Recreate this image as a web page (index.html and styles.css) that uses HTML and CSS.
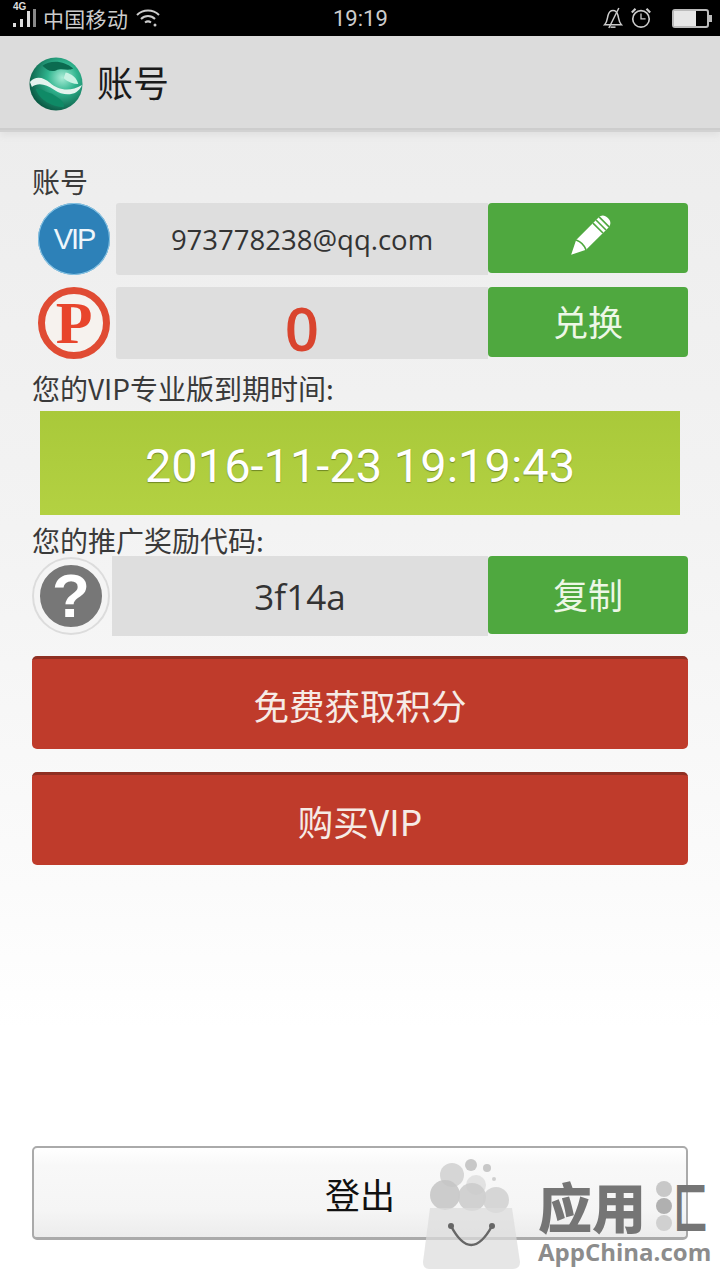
FILE: index.html
```html
<!DOCTYPE html>
<html>
<head>
	<meta charset="utf-8">
	<title>账号</title>
	<link rel="stylesheet" href="styles.css">
</head>
<body>
	<div class="phone">
		<div class="statusbar">
			<div class="status-left">
				<svg class="signal" width="26" height="24" viewBox="0 0 26 24">
					<rect x="0" y="17" width="3" height="4" fill="#ddd"/>
					<rect x="7" y="13" width="3" height="8" fill="#ddd"/>
					<rect x="14" y="5" width="3" height="16" fill="#ddd"/>
					<rect x="20" y="3" width="3" height="18" fill="#888"/>
				</svg>
				<span class="signal-tag">4G</span>
				<span class="carrier">中国移动</span>
				<svg class="wifi" width="26" height="20" viewBox="0 0 26 20" fill="none" stroke="#ccc" stroke-width="2">
					<path d="M2 7C8 1 18 1 24 7"/>
					<path d="M6 11C10 7 16 7 20 11"/>
					<path d="M10 14.500C12 13 14 13 16 14.500"/>
					<circle cx="20" cy="17" r="1.500" fill="#ccc" stroke="none"/>
				</svg>
			</div>
			<span class="clock">19:19</span>
			<div class="status-right">
				<svg width="20" height="26" viewBox="0 0 24 26" fill="none" stroke="#ccc" stroke-width="1.800">
					<path d="M2 21C5 18 5 14 6 10C7 6 10 4 12 4C15 4 17 6 18 10C19 14 19 18 22 21Z"/>
					<path d="M9 24H15"/>
					<path d="M19 1L7 25"/>
				</svg>
				<svg width="22" height="24" viewBox="0 0 24 26" fill="none" stroke="#ccc" stroke-width="1.800">
					<circle cx="12" cy="14" r="9"/>
					<path d="M12 8V14H17" stroke-width="1.400"/>
					<path d="M2 7L6 3M22 7L18 3" stroke-width="2.400"/>
				</svg>
				<div class="battery"><div class="battery-level"></div></div>
			</div>
		</div>

		<div class="appbar">
			<svg class="globe" width="54" height="54" viewBox="0 0 56 56">
				<defs>
					<radialGradient id="sea" cx="0.62" cy="0.38" r="0.7">
						<stop offset="0" stop-color="#a8ecd6"/>
						<stop offset="0.4" stop-color="#2fb48e"/>
						<stop offset="1" stop-color="#06503c"/>
					</radialGradient>
				</defs>
				<circle cx="28" cy="28" r="27.500" fill="url(#sea)"/>
				<path d="M7 33C10 44 24 52 36 52C38 46 30 42 24 38C16 36 12 32 7 33Z" fill="#0f8a66"/>
				<path d="M14 9C22 3 36 3 46 12C40 15 34 11 28 14C22 16 18 13 14 9Z" fill="#0b6b50"/>
				<path d="M38 16C44 17 50 22 51 28C46 28 40 26 36 22Z" fill="#c9f3e4"/>
				<path d="M1 26C7 19 15 21 22 27C30 34 42 37 55 29C50 41 36 41 26 34C18 28 9 26 3 31Z" fill="#e4f3ee"/>
			</svg>
			<span class="appbar-title">账号</span>
		</div>

		<div class="content">
			<div class="label label-first">账号</div>
			<div class="row row-tight">
				<div class="badge badge-vip">VIP</div>
				<div class="field field-mail">973778238@qq.com</div>
				<div class="btn-green btn-short">
					<svg width="52" height="52" viewBox="0 0 48 48">
						<g transform="rotate(45 24 24)">
							<path d="M24 -2C28 -2 30.500 0 30.500 4V33L24 46L17.500 33V4C17.500 0 20 -2 24 -2Z" fill="#fff"/>
							<path d="M17.500 3H30.500M17.500 7H30.500M17.500 11H30.500" stroke="#4fa83f" stroke-width="1.500"/>
							<path d="M17.500 33Q24 30 30.500 33" stroke="#4fa83f" stroke-width="1.500" fill="none"/>
						</g>
					</svg>
				</div>
			</div>
			<div class="row row-points">
				<div class="badge badge-points"><span>P</span></div>
				<div class="field field-points">0</div>
				<div class="btn-green btn-short btn-text">兑换</div>
			</div>
			<div class="label label-expire">您的VIP专业版到期时间:</div>
			<div class="expire">2016-11-23 19:19:43</div>
			<div class="label label-code">您的推广奖励代码:</div>
			<div class="row row-code">
				<div class="badge-help"><span>?</span></div>
				<div class="field field-code">3f14a</div>
				<div class="btn-green btn-copy btn-text">复制</div>
			</div>
			<div class="btn-red btn-first">免费获取积分</div>
			<div class="btn-red btn-second">购买VIP</div>
			<div class="btn-logout">登出</div>
		</div>

		<div class="watermark">
			<svg class="bag" width="104" height="116" viewBox="0 0 104 116">
				<circle cx="31" cy="19" r="12" fill="#c8c8c8" opacity="0.7"/>
				<circle cx="50" cy="9" r="6" fill="#bbb" opacity="0.8"/>
				<circle cx="66" cy="12" r="4" fill="#bbb" opacity="0.8"/>
				<circle cx="73" cy="23" r="2" fill="#c4c4c4" opacity="0.8"/>
				<circle cx="55" cy="29" r="10" fill="#d4d4d4" opacity="0.6"/>
				<circle cx="24" cy="39" r="15" fill="#c4c4c4" opacity="0.85"/>
				<circle cx="51" cy="41" r="14" fill="#cacaca" opacity="0.85"/>
				<circle cx="75" cy="44" r="13" fill="#d0d0d0" opacity="0.85"/>
				<path d="M9 52H91L99 106Q99 113 92 113H8Q2 113 2 106Z" fill="#dcdcdc" opacity="0.72"/>
				<path d="M30 70Q50 108 71 70" fill="none" stroke="#666" stroke-width="2.500"/>
				<circle cx="30" cy="70" r="3" fill="#666"/>
				<circle cx="71" cy="70" r="3" fill="#666"/>
			</svg>
			<div class="wm-brand">
				<div class="wm-name">
					<span>应用</span>
					<svg class="wm-dots" width="18" height="52" viewBox="0 0 18 52">
						<circle cx="9" cy="9" r="8" fill="#c8c8c8"/>
						<circle cx="9" cy="26" r="8" fill="#b0b0b0"/>
						<circle cx="9" cy="43" r="8" fill="#d0d0d0"/>
					</svg>
					<span class="wm-last">匚</span>
				</div>
				<div class="wm-site">AppChina.com</div>
			</div>
		</div>
	</div>
</body>
</html>
```

FILE: styles.css
```css
*{margin: 0; padding: 0; box-sizing: border-box;}
body{
	width: 720px;
	height: 1280px;
	overflow: hidden;
	font-family: "Noto Sans CJK SC", sans-serif;
}
.phone{
	position: relative;
	width: 720px;
	height: 1280px;
	background: #fff;
}
.statusbar{
	display: flex;
	align-items: center;
	justify-content: space-between;
	position: relative;
	height: 36px;
	padding: 0 11px 0 13px;
	background: #000;
	color: #ccc;
}
.status-left{
	display: flex;
	align-items: center;
	position: relative;
}
.signal-tag{
	position: absolute;
	left: 0;
	top: 1px;
	font: bold 10px "Liberation Sans", sans-serif;
	color: #ddd;
}
.carrier{
	margin-left: 4px;
	font-size: 21px;
	letter-spacing: 0.3px;
	line-height: 36px;
}
.wifi{
	margin-left: 7px;
}
.clock{
	position: absolute;
	left: 333px;
	top: 0;
	font: 22px/38px Roboto, sans-serif;
}
.status-right{
	display: flex;
	align-items: center;
	gap: 7px;
}
.battery{
	position: relative;
	width: 37px;
	height: 19px;
	margin-left: 13px;
	border: 2px solid #bbb;
	border-radius: 3px;
}
.battery:after{
	content: "";
	position: absolute;
	right: -5px;
	top: 4px;
	width: 3px;
	height: 7px;
	background: #bbb;
}
.battery-level{
	width: 22px;
	height: 15px;
	background: #e6e6e6;
}
.appbar{
	display: flex;
	align-items: center;
	height: 92px;
	padding: 3px 0 0 29px;
	background: #dcdcdc;
	box-shadow: 0 2px 0 #cdcdcd, 0 4px 0 #d2d2d2, 0 8px 6px #e2e2e2;
	position: relative;
}
.appbar-title{
	margin: 0 0 5px 14px;
	font-size: 36px;
	line-height: 44px;
	color: #1a1a1a;
}
.content{
	height: 1152px;
	padding: 39px 32px 0 32px;
	background: linear-gradient(to bottom, #ededed 0, #f3f3f3 400px, #fbfbfb 760px, #fff 900px);
}
.label{
	font-size: 28px;
	line-height: 28px;
	padding-bottom: 2px;
	color: #3a3a3a;
}
.row{
	display: flex;
	align-items: flex-start;
}
.row-tight{
	margin-top: 6px;
	padding-left: 6px;
}
.row-points{
	margin-top: 12px;
	padding-left: 6px;
}
.badge{
	flex: none;
	width: 72px;
	height: 72px;
	border-radius: 50%;
	display: flex;
	align-items: center;
	justify-content: center;
}
.badge-vip{
	background: #2d81b8;
	box-shadow: inset 0 0 0 1px #8cc7e6;
	color: #eef6fb;
	font: 29px "Liberation Sans", sans-serif;
	letter-spacing: -2px;
}
.badge-points{
	background: #f6f2ee;
	border: 7px solid #e04b33;
	color: #e8452c;
	font: bold 60px "Liberation Serif", serif;
}
.field{
	flex: none;
	width: 372px;
	height: 72px;
	margin-left: 6px;
	background: #dedede;
	border-radius: 3px 0 0 3px;
	display: flex;
	align-items: center;
	justify-content: center;
}
.field-mail{
	font: 27.500px "Open Sans", sans-serif;
	color: #333;
}
.field-points{
	font: 600 60px "Open Sans", sans-serif;
	color: #d9442e;
	padding-top: 10px;
}
.field-code{
	width: 376px;
	height: 80px;
	margin-left: 4px;
	border-radius: 0;
	font: 35px "Open Sans", sans-serif;
	color: #333;
}
.btn-green{
	flex: none;
	width: 200px;
	display: flex;
	align-items: center;
	justify-content: center;
	background: #4fa83f;
	border-radius: 4px;
	color: #edf7e6;
	font-size: 35px;
}
.btn-text{
	padding-bottom: 3px;
}
.btn-short{
	height: 70px;
}
.btn-copy{
	height: 78px;
}
.label-expire{
	margin-top: 15px;
}
.expire{
	margin: 7px 8px 0 8px;
	height: 104px;
	background: linear-gradient(to bottom, #a9c93a, #b3d142);
	color: #fff;
	font: 47px/110px Roboto, sans-serif;
	text-align: center;
	text-shadow: 0 1px 1px rgba(70, 90, 20, 0.6);
}
.label-code{
	margin-top: 11px;
}
.row-code{
	padding-left: 2px;
}
.badge-help{
	flex: none;
	width: 74px;
	height: 74px;
	margin-top: 3px;
	border-radius: 50%;
	background: #777;
	border: 6px solid #f4f4f4;
	box-shadow: 0 0 0 2px #dcdcdc;
	color: #fff;
	font: bold 62px/62px "Liberation Sans", sans-serif;
	text-align: center;
}
.btn-red{
	height: 93px;
	background: #bf3b2b;
	border-top: 3px solid #8f2f22;
	border-radius: 5px;
	color: #f6ebe6;
	font-size: 35.500px;
	line-height: 92px;
	text-align: center;
}
.btn-first{
	margin-top: 20px;
}
.btn-second{
	margin-top: 23px;
}
.btn-logout{
	height: 94px;
	margin-top: 281px;
	background: linear-gradient(to bottom, #fff 0, #f8f8f8 20%, #f5f5f5 70%, #ececec 100%);
	border: 2px solid #aaa;
	border-bottom-width: 3px;
	border-radius: 5px;
	color: #111;
	font-size: 35px;
	line-height: 92px;
	text-align: center;
}
.watermark{
	position: absolute;
	left: 421px;
	top: 1156px;
	width: 299px;
	display: flex;
}
.wm-brand{
	margin-left: 13px;
	padding-top: 23px;
	white-space: nowrap;
}
.wm-name{
	display: flex;
	align-items: center;
	width: 172px;
	height: 54px;
	color: #757575;
	font-size: 54px;
	line-height: 54px;
	font-weight: 900;
}
.wm-dots{
	flex: none;
	margin-left: 9px;
}
.wm-last{
	flex: none;
	margin-left: 1px;
	transform: scaleX(0.62);
	transform-origin: left center;
}
.wm-site{
	margin-top: 5px;
	color: #8c8c8c;
	font: bold 24px/28px "Open Sans", sans-serif;
}
```
